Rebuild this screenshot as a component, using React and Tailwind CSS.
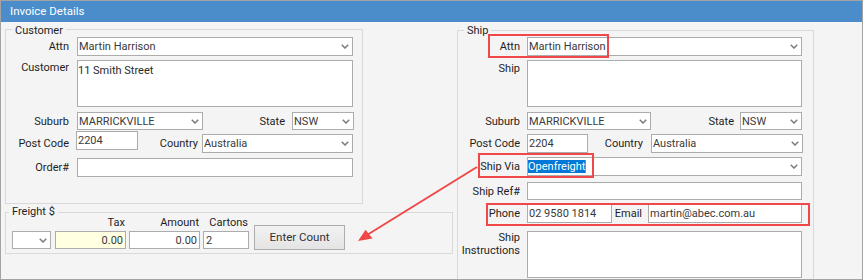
import React from "react";

function Chevron({ className = "mr-[3px]" }) {
  return (
    <svg width="8" height="5" viewBox="0 0 8 5" className={`shrink-0 ${className}`}>
      <polyline points="0.75,0.75 4,4 7.25,0.75" fill="none" stroke="#7b7b7b" strokeWidth="1.5" />
    </svg>
  );
}

function Field({ className = "", children, select = false, right = false, pad = "pl-[1px]", bg = "bg-white" }) {
  return (
    <div className={`shrink-0 flex items-center border border-[#acacac] ${bg} ${className}`}>
      <div
        className={`flex-1 min-w-0 overflow-hidden whitespace-nowrap leading-[13px] text-[#3a3a3a] ${
          right ? "text-right pr-[2px]" : pad
        }`}
      >
        {children}
      </div>
      {select && <Chevron />}
    </div>
  );
}

function L({ className = "", children }) {
  return <div className={`w-[63px] shrink-0 text-right leading-[13px] text-[#1e1e1e] ${className}`}>{children}</div>;
}

function L2({ className = "", children }) {
  return <div className={`w-[62px] shrink-0 text-right leading-[13px] text-[#1e1e1e] ${className}`}>{children}</div>;
}

export default function App() {
  return (
    <div className="relative w-[863px] h-[280px] overflow-hidden border border-[#a3a3a3] bg-[#f4f4f4] text-[11px] leading-[13px] text-[#1e1e1e] font-['Roboto','Noto_Sans',sans-serif]">
      <div className="h-[21px] bg-[#4b8dcb] pl-[9px] text-white leading-[21px] text-[11.5px]">Invoice Details</div>

      <div className="flex pl-[4px]">
        {/* Left column */}
        <div className="w-[448px] shrink-0">
          {/* Customer group */}
          <div className="relative mt-[7px] w-[358px] h-[175px] border border-[#d9d9d9]">
            <span className="absolute left-[6px] top-[-6px] px-[3px] bg-[#f4f4f4] leading-[13px]">Customer</span>
            <div className="flex flex-col">
              <div className="flex items-center mt-[7px]">
                <L>Attn</L>
                <Field select className="ml-[8px] w-[276px] h-[19px]">Martin Harrison</Field>
              </div>
              <div className="flex items-start mt-[4px]">
                <L className="mt-[1px]">Customer</L>
                <div className="ml-[8px] w-[276px] h-[47px] border border-[#acacac] bg-white pt-[3px] leading-[13px] text-[#2a2a2a]">
                  11 Smith Street
                </div>
              </div>
              <div className="flex items-center mt-[5px]">
                <L>Suburb</L>
                <Field select className="ml-[8px] w-[126px] h-[18px]">MARRICKVILLE</Field>
                <div className="w-[82px] shrink-0 text-right">State</div>
                <Field select className="ml-[7px] w-[62px] h-[18px]">NSW</Field>
              </div>
              <div className="flex items-start mt-[1px]">
                <L className="mt-[6px]">Post Code</L>
                <Field className="ml-[7px] w-[62px] h-[19px]">2204</Field>
                <div className="w-[60px] shrink-0 text-right mt-[6px]">Country</div>
                <Field select className="ml-[4px] mt-[3px] w-[151px] h-[19px]">Australia</Field>
              </div>
              <div className="flex items-center mt-[5px]">
                <L>Order#</L>
                <Field className="ml-[8px] w-[276px] h-[19px]"></Field>
              </div>
            </div>
          </div>

          {/* Freight group */}
          <div className="relative mt-[8px] w-[448px] h-[42px] border border-[#d9d9d9]">
            <span className="absolute left-[3px] top-[-8px] px-[3px] bg-[#f4f4f4] leading-[13px]">Freight $</span>
            <div className="flex items-end pl-[6px] mt-[3px]">
              <Field select className="w-[39px] h-[18px]"></Field>
              <div className="ml-[4px] w-[71px] shrink-0 flex flex-col">
                <div className="text-right pr-[1px] leading-[13px]">Tax</div>
                <Field right bg="bg-[#ffffe1]" className="mt-[2px] h-[18px]">0.00</Field>
              </div>
              <div className="ml-[3px] w-[71px] shrink-0 flex flex-col">
                <div className="text-right pr-[1px] leading-[13px]">Amount</div>
                <Field right className="mt-[2px] h-[18px]">0.00</Field>
              </div>
              <div className="ml-[3px] w-[46px] shrink-0 flex flex-col">
                <div className="text-right pr-[1px] leading-[13px]">Cartons</div>
                <Field pad="pl-[2px]" className="mt-[2px] h-[18px]">2</Field>
              </div>
              <button className="ml-[5px] mb-[-1px] w-[91px] h-[25px] shrink-0 border border-[#adadad] bg-gradient-to-b from-[#f2f2f2] to-[#e4e4e4] text-[#333] text-[11.5px] leading-[13px]">
                Enter Count
              </button>
            </div>
          </div>
        </div>

        {/* Ship group */}
        <div className="relative ml-[4px] mt-[8px] w-[357px] h-[260px] shrink-0 border border-[#d9d9d9]">
          <span className="absolute left-[6px] top-[-7px] px-[3px] bg-[#f4f4f4] leading-[13px]">Ship</span>
          <div className="flex flex-col">
            <div className="flex items-center mt-[6px]">
              <L2>Attn</L2>
              <Field select className="ml-[7px] w-[275px] h-[19px]">Martin Harrison</Field>
            </div>
            <div className="flex items-start mt-[4px]">
              <L2 className="mt-[2px]">Ship</L2>
              <div className="ml-[7px] w-[275px] h-[47px] border border-[#acacac] bg-white"></div>
            </div>
            <div className="flex items-center mt-[5px]">
              <L2>Suburb</L2>
              <Field select className="ml-[7px] w-[124px] h-[18px]">MARRICKVILLE</Field>
              <div className="w-[83px] shrink-0 text-right">State</div>
              <Field select className="ml-[6px] w-[62px] h-[18px]">NSW</Field>
            </div>
            <div className="flex items-center mt-[4px]">
              <L2>Post Code</L2>
              <Field className="ml-[7px] w-[61px] h-[19px]">2204</Field>
              <div className="w-[55px] shrink-0 text-right">Country</div>
              <Field select className="ml-[8px] w-[152px] h-[19px]">Australia</Field>
            </div>
            <div className="flex items-center mt-[4px]">
              <L2>Ship Via</L2>
              <Field select pad="pl-0" className="ml-[7px] w-[275px] h-[19px]">
                <span className="inline-block h-[13px] bg-[#0078d7] text-white leading-[13px] align-top">Openfreight</span>
                <span className="inline-block w-[1px] h-[13px] bg-[#d9822b] align-top"></span>
              </Field>
            </div>
            <div className="flex items-center mt-[6px]">
              <L2>Ship Ref#</L2>
              <Field className="ml-[7px] w-[275px] h-[18px]"></Field>
            </div>
            <div className="flex items-center mt-[4px]">
              <L2>Phone</L2>
              <Field className="ml-[7px] w-[85px] h-[19px]">02 9580 1814</Field>
              <div className="w-[30px] shrink-0 text-right">Email</div>
              <Field className="ml-[6px] w-[154px] h-[19px]">martin@abec.com.au</Field>
            </div>
            <div className="flex items-start mt-[8px]">
              <L2>
                Ship
                <br />
                Instructions
              </L2>
              <div className="ml-[7px] w-[275px] h-[47px] border border-[#acacac] bg-white"></div>
            </div>
          </div>
        </div>
      </div>

      {/* Annotations */}
      <div className="absolute left-[487px] top-[33px] w-[121px] h-[24px] border-2 border-[#f04848]"></div>
      <div className="absolute left-[477px] top-[152px] w-[116px] h-[25px] border-2 border-[#f04848]"></div>
      <div className="absolute left-[485px] top-[202px] w-[324px] h-[23px] border-2 border-[#f04848]"></div>
      <svg className="absolute left-[-1px] top-[-1px] pointer-events-none" width="863" height="280" viewBox="0 0 863 280">
        <line x1="477" y1="167" x2="367" y2="235" stroke="#f04848" strokeWidth="2" />
        <polygon points="358,241 365.6,229.8 369.2,234.6 372.6,238.6" fill="#f04848" />
      </svg>
    </div>
  );
}
